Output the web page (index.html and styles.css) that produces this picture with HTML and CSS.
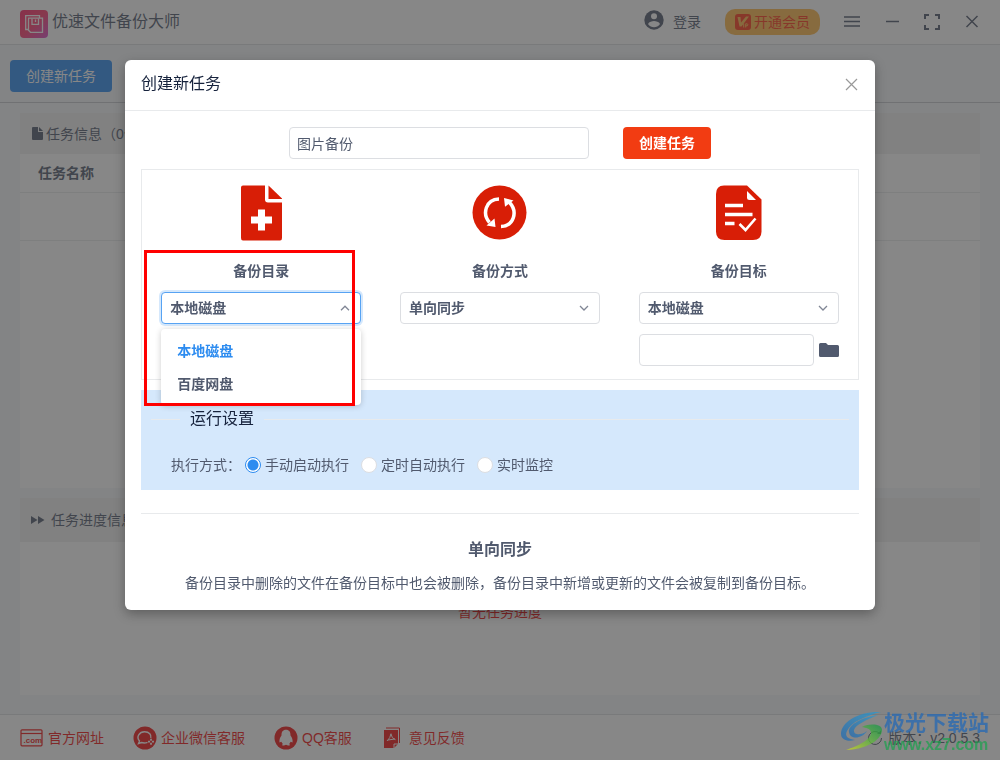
FILE: index.html
```html
<!DOCTYPE html>
<html lang="zh-CN">
<head>
<meta charset="utf-8">
<meta name="viewport" content="width=device-width, initial-scale=1">
<title>优速文件备份大师</title>
<link rel="stylesheet" href="styles.css">
</head>
<body>
<div class="app">
  <header class="titlebar">
    <svg class="logo" viewBox="0 0 28 28" aria-hidden="true">
      <defs><linearGradient id="logoFill" x1="0" y1="0" x2="1" y2="1"><stop offset="0" stop-color="#ff2869"/><stop offset=".5" stop-color="#ff3d6e"/><stop offset="1" stop-color="#d64ac8"/></linearGradient></defs>
      <rect width="28" height="28" rx="4" fill="url(#logoFill)"/>
      <g fill="none" stroke="#fff" stroke-width="1.3"><path d="M8 19.500H5.700V5.700H19.500V8"/><path d="M8.500 8.200H22.500V22.300H10.500L8.500 20.300Z"/><path d="M12 8.500V14.300H18.500V8.500M15.500 9.500V12"/></g>
    </svg>
    <h1 class="app-name">优速文件备份大师</h1>
    <button class="login" type="button">
      <svg viewBox="0 0 20 20" width="20" height="20" aria-hidden="true"><circle cx="10" cy="10" r="9.7" fill="#515a6e"/><circle cx="10" cy="6.3" r="3" fill="#fff"/><path d="M4 14C5 11.7 8 11 10 11S15 11.7 16 14C14.5 16.200 12.200 17.200 10 17.200S5.500 16.200 4 14Z" fill="#fff"/></svg>
      <span>登录</span>
    </button>
    <button class="vip" type="button">
      <svg viewBox="0 0 16 16" width="16" height="16" aria-hidden="true"><rect width="16" height="16" rx="3" fill="#ff3a18"/><path d="M2.500 3H5.500L6 8.500 11 2.500H14L6.500 12.500H4.500Z" fill="#ffb84d"/><path d="M8.700 9.500V13.500M10.700 13.500V9.800H12.300Q13.500 10.800 12.300 11.800H10.600" fill="none" stroke="#ffb84d"/></svg>
      <span>开通会员</span>
    </button>
    <div class="window-tools">
      <button type="button" aria-label="菜单"><svg viewBox="0 0 16 16" width="16" height="16"><path d="M0 3H16M0 7.500H16M0 12H16"/></svg></button>
      <button type="button" aria-label="最小化"><svg viewBox="0 0 16 16" width="16" height="16"><path d="M2 7.500H15"/></svg></button>
      <button type="button" aria-label="最大化"><svg class="thick" viewBox="0 0 16 16" width="16" height="16"><path d="M1 5V1H5M11 1H15V5M15 11V15H11M5 15H1V11"/></svg></button>
      <button type="button" aria-label="关闭窗口"><svg viewBox="0 0 16 16" width="16" height="16"><path d="M2.500 2 13.500 13M13.500 2 2.500 13"/></svg></button>
    </div>
  </header>
  <div class="toolbar"><button class="primary" type="button">创建新任务</button></div>
  <main class="content">
    <section class="tasks">
      <h2 class="panel-title"><svg viewBox="0 0 11 13" width="11" height="13" aria-hidden="true"><path d="M0 1Q0 0 1 0H6V5H11V12Q11 13 10 13H1Q0 13 0 12ZM7 0 11 4H7Z" fill="#515a6e"/></svg>任务信息（0个）</h2>
      <table class="task-table">
        <thead><tr><th>任务名称</th></tr></thead>
        <tbody><tr><td></td></tr></tbody>
      </table>
    </section>
    <section class="progress">
      <h2 class="panel-title tall"><svg viewBox="0 0 15 10" width="15" height="10" aria-hidden="true"><path d="M1 1 7.500 5 1 9ZM8 1 14.500 5 8 9Z" fill="#515a6e"/></svg>任务进度信息</h2>
      <p class="empty">暂无任务进度</p>
    </section>
  </main>
  <footer class="footer">
    <a href="#site"><svg viewBox="0 0 24 18" width="24" height="18" aria-hidden="true"><rect x="1" y=".8" width="21" height="16" rx="1" fill="none" stroke="#f01414" stroke-width="1.2"/><path d="M1 4.500H22" stroke="#f01414" stroke-width="1.200"/><text x="3.500" y="14" class="com">.com</text></svg><span>官方网址</span></a>
    <a href="#wecom"><svg viewBox="0 0 24 24" width="24" height="24" aria-hidden="true"><circle cx="12" cy="12" r="11.500" fill="#f01414"/><path d="M14.500 16.300Q11.500 17.500 8.500 16.500L5.500 17.500 6.500 15C2.800 10.800 6.500 5.800 11.500 5.800S18.500 9 17.800 12" fill="none" stroke="#fff" stroke-width="1.400"/><path d="M18 12.700V18.700M15 15.700H21" stroke="#fff" stroke-width="1.800" stroke-dasharray="2 2"/></svg><span>企业微信客服</span></a>
    <a href="#qq"><svg viewBox="0 0 24 24" width="24" height="24" aria-hidden="true"><circle cx="12" cy="12" r="11.500" fill="#f01414"/><path d="M12 3.800C8.700 3.800 7.500 6 7.500 9.500 6 11.500 5 14 5.500 16.500L7.300 15.700 8.800 18C7.500 19 8 19.500 10 19.500L12 18.700 14 19.500C16 19.500 16.500 19 15.200 18L16.700 15.700 18.500 16.500C19 14 18 11.500 16.500 9.500 16.500 6 15.300 3.800 12 3.800Z" fill="#fff"/></svg><span>QQ客服</span></a>
    <a href="#feedback"><svg viewBox="-2 0 24 22" width="24" height="22" aria-hidden="true"><path d="M1 3H15V17L11 21H1Z" fill="#f01414"/><path d="M3 1H16.500V16" fill="none" stroke="#f01414"/><path d="M11 21V17H15M8 6.500Q7.500 11 4 14M8 7Q8.500 11.500 12.500 12.700M5 13 12 12" fill="none" stroke="#fff"/></svg><span>意见反馈</span></a>
    <p class="version"><svg viewBox="0 0 16 16" width="16" height="16" aria-hidden="true"><path d="M12.500 3.300A6.500 6.500 0 1 0 14.500 8" fill="none" stroke="#515a6e"/><path d="M10 4H14V.5Z" fill="#515a6e"/></svg>版本：v2.0.5.3</p>
  </footer>
</div>

<div class="mask">
  <div class="modal" role="dialog" aria-labelledby="modalTitle">
    <header class="modal-head">
      <h2 id="modalTitle">创建新任务</h2>
      <button type="button" class="close" aria-label="关闭"><svg viewBox="0 0 13 13" width="13" height="13"><path d="M1 1 12 12M12 1 1 12" stroke="#999" stroke-width="1.200"/></svg></button>
    </header>
    <form class="modal-body">
      <div class="name-row">
        <input class="field name" type="text" value="图片备份" aria-label="任务名称">
        <button class="create" type="button">创建任务</button>
      </div>
      <div class="choices">
        <div class="choice">
          <svg width="56" height="56" viewBox="0 0 56 56" aria-hidden="true"><path d="M8 2.500Q8 .5 10 .5H32V14.500Q32 17.500 35 17.500H49V53Q49 55.500 47 55.500H10Q8 55.500 8 53Z" fill="#d81e06"/><path d="M35.500.5 49 13.500V14H35.500Z" fill="#d81e06"/><path d="M25 24.500H32V31.500H39V38.500H32V45.500H25V38.500H18V31.500H25Z" fill="#fff"/></svg>
          <label for="source">备份目录</label>
          <div class="select open">
            <select id="source"><option>本地磁盘</option><option>百度网盘</option></select>
            <svg class="arrow" viewBox="0 0 10 6" width="10" height="6" aria-hidden="true"><path d="M1 5.200 5 1.200 9 5.200"/></svg>
            <ul class="menu"><li class="current">本地磁盘</li><li>百度网盘</li></ul>
          </div>
          <div class="highlight"></div>
        </div>
        <div class="choice">
          <svg width="56" height="56" viewBox="0 0 56 56" aria-hidden="true"><circle cx="27.500" cy="27.500" r="27" fill="#d81e06"/><path d="M27 14C13.500 14.500 10 29 17.500 37.500M29 41.500C42 41 46 26.500 37.500 17.500" fill="none" stroke="#fff" stroke-width="3.500"/><path d="M14.500 40.500 23.500 42 22.500 33.500ZM32 13 41.500 15.500 33 21.800Z" fill="#fff"/></svg>
          <label for="mode">备份方式</label>
          <div class="select">
            <select id="mode"><option>单向同步</option></select>
            <svg class="arrow" viewBox="0 0 10 6" width="10" height="6" aria-hidden="true"><path d="M1 1 5 5 9 1"/></svg>
          </div>
        </div>
        <div class="choice">
          <svg width="56" height="56" viewBox="0 0 56 56" aria-hidden="true"><path d="M13 .5H36L50.500 14.500V46.500Q50.500 55 42 55H13.500Q5 55 5 46.500V9Q5 .5 13 .5Z" fill="#d81e06"/><path d="M36 6 45 15H38.500Q36 15 36 12.500Z" fill="#fff"/><path d="M14 20.500H32M14 29.500H41.500M14 38.500H23.500" stroke="#fff" stroke-width="3.500"/><path d="M28.500 39 34.500 45 44.500 33.500" fill="none" stroke="#fff" stroke-width="2.600"/></svg>
          <label for="target">备份目标</label>
          <div class="select">
            <select id="target"><option>本地磁盘</option></select>
            <svg class="arrow" viewBox="0 0 10 6" width="10" height="6" aria-hidden="true"><path d="M1 1 5 5 9 1"/></svg>
          </div>
          <div class="path-row">
            <input class="field" type="text" aria-label="备份目标路径">
            <button type="button" class="folder" aria-label="选择文件夹"><svg viewBox="0 0 20 14" width="20" height="14"><path d="M0 1.500Q0 0 1.500 0H7L9 2H18.500Q20 2 20 3.500V12.500Q20 14 18.500 14H1.500Q0 14 0 12.500Z" fill="#515a6e"/></svg></button>
          </div>
        </div>
      </div>
      <section class="run">
        <h3 class="divider">运行设置</h3>
        <div class="radios" role="radiogroup" aria-labelledby="runLabel">
          <span id="runLabel" class="run-label">执行方式：</span>
          <label><input type="radio" name="run" checked>手动启动执行</label>
          <label><input type="radio" name="run">定时自动执行</label>
          <label><input type="radio" name="run">实时监控</label>
        </div>
      </section>
      <section class="explain">
        <h3>单向同步</h3>
        <p>备份目录中删除的文件在备份目标中也会被删除，备份目录中新增或更新的文件会被复制到备份目标。</p>
      </section>
    </form>
  </div>
</div>

<div class="watermark">
  <svg viewBox="0 0 42 40" width="42" height="40" aria-hidden="true">
    <defs><linearGradient id="leaf" x1="0" y1="1" x2="1" y2="0"><stop offset="0" stop-color="#d0d822"/><stop offset=".5" stop-color="#62b83c"/><stop offset="1" stop-color="#159447"/></linearGradient><linearGradient id="wave" x1="0" y1="1" x2="1" y2="0"><stop offset="0" stop-color="#2469ae"/><stop offset="1" stop-color="#2b9bd0"/></linearGradient></defs>
    <path d="M40 1C18 0 0 11 0 23 0 29 7 31 14 29 8 28 3 26 6 20 10 11 24 5 40 1Z" fill="url(#wave)"/>
    <path d="M37 4C18 7 7 15 8 21 9 29 21 28 26 20 20 25 12 24 13 19 15 13 26 9 37 4Z" fill="url(#wave)"/>
    <path d="M21 16C29 12 41 13 41 19 41 27 29 38 5 39 17 35 31 28 30 21 29 17 25 17 21 16Z" fill="url(#leaf)"/>
  </svg>
  <div class="mark-text"><span class="mark-name">极光下载站</span><span class="mark-url">www.xz7.com</span></div>
</div>
</body>
</html>
```
FILE: styles.css
```css
* { box-sizing: border-box; }
body, h1, h2, h3, p, ul { margin: 0; }
body {
  font-family: "Liberation Sans", "Noto Sans CJK SC", sans-serif;
  font-size: 14px;
  line-height: 20px;
  color: #515a6e;
}
button, input, select { font: inherit; color: inherit; }
button { border: 0; padding: 0; background: none; }
svg { display: block; flex: none; }

.app { min-height: 100vh; display: flex; flex-direction: column; background: #f5f7f9; }
.titlebar {
  height: 45px;
  flex: none;
  display: flex;
  align-items: center;
  padding: 0 20px;
  background: #fff;
  border-bottom: 1px solid #dcdee2;
}
.logo { width: 28px; height: 28px; margin-top: 3px; }
.app-name { margin-left: 4px; margin-right: auto; font-size: 16px; font-weight: 400; }
.login { display: flex; align-items: center; gap: 9px; }
.login svg { margin-bottom: 4px; }
.vip {
  height: 26px;
  display: flex;
  align-items: center;
  gap: 3px;
  padding: 0 10px;
  margin-left: 24px;
  border-radius: 10px;
  background: #ffb84d;
  color: #ff3a18;
}
.window-tools { display: flex; gap: 24px; margin-left: 24px; }
.window-tools svg { fill: none; stroke: #515a6e; stroke-width: 1.5; }
.window-tools .thick { stroke-width: 2; }
.toolbar { flex: none; padding: 15px 10px 10px; border-bottom: 1px solid #c5c8ce; }
.primary {
  display: block;
  height: 32px;
  padding: 0 16px;
  border-radius: 4px;
  background: #2d8cf0;
  color: #fff;
}
.content { flex: 1; display: flex; flex-direction: column; gap: 10px; padding: 10px 20px 19px; }
.tasks { flex: 375 1 0px; background: #fff; }
.progress { flex: 197 1 0px; background: #fff; }
.panel-title {
  display: flex;
  align-items: center;
  gap: 3px;
  height: 41px;
  padding-left: 12px;
  background: #f0f0f0;
  font-size: 14px;
  font-weight: 400;
}
.panel-title.tall { height: 44px; padding-left: 10px; gap: 6px; }
.task-table { width: 100%; border-collapse: collapse; }
.task-table th, .task-table td { padding: 0 18px; border-bottom: 1px solid #e8eaec; text-align: left; }
.task-table th { height: 38px; font-weight: 700; }
.task-table td { height: 48px; }
.empty { padding-top: 60px; text-align: center; color: #f01414; }
.footer {
  height: 46px;
  flex: none;
  display: flex;
  align-items: center;
  gap: 29px;
  padding: 0 20px;
  background: #fff;
  border-top: 1px solid #dcdee2;
}
.footer a { display: flex; align-items: center; gap: 4px; color: #f01414; text-decoration: none; }
.com { font: bold 8px "Liberation Sans", sans-serif; fill: #f01414; }
.version { display: flex; align-items: center; gap: 5px; margin-left: auto; }

.mask { position: fixed; inset: 0; padding-top: 60px; overflow: auto; background: rgba(55, 55, 55, .6); }
.modal {
  width: 75%;
  min-width: 700px;
  margin: 0 auto;
  background: #fff;
  border-radius: 6px;
  box-shadow: 0 4px 12px rgba(0, 0, 0, .3);
}
.modal-head {
  display: flex;
  align-items: center;
  justify-content: space-between;
  height: 51px;
  padding: 0 17px 2px 16px;
  border-bottom: 1px solid #e8eaec;
}
.modal-head h2 { font-size: 16px; font-weight: 400; color: #17233d; }
.modal-body { padding: 16px; }
.name-row { display: flex; justify-content: center; gap: 34px; margin-bottom: 10px; }
.field {
  height: 32px;
  min-width: 0;
  padding: 0 7px;
  border: 1px solid #dcdee2;
  border-radius: 4px;
  background: #fff;
}
.name { width: 300px; }
.create { height: 32px; padding: 0 16px; border-radius: 4px; background: #f23c12; color: #fff; font-weight: 700; }
.choices { display: grid; grid-template-columns: repeat(3, 1fr); border: 1px solid #e8eaec; }
.choice {
  position: relative;
  display: flex;
  flex-direction: column;
  align-items: center;
  height: 209px;
  padding: 15px 19px 0;
}
.choice > label { margin: 20px 0 11px; font-weight: 700; }
.select { position: relative; width: 100%; max-width: 200px; font-weight: 700; }
.select select {
  display: block;
  width: 100%;
  height: 32px;
  padding: 0 8px;
  appearance: none;
  border: 1px solid #dcdee2;
  border-radius: 4px;
  background: #fff;
}
.open select { border-color: #57a3f3; box-shadow: 0 0 0 2px rgba(45, 140, 240, .2); }
.arrow { position: absolute; top: 13px; right: 11px; fill: none; stroke: #808695; stroke-width: 1.3; }
.menu {
  position: absolute;
  z-index: 1;
  top: 37px;
  left: 0;
  width: 100%;
  padding: 5px 0;
  list-style: none;
  background: #fff;
  border-radius: 4px;
  box-shadow: 0 1px 6px rgba(0, 0, 0, .2);
}
.menu li { padding: 7px 16px 6px; }
.menu .current { color: #2d8cf0; }
.highlight {
  position: absolute;
  z-index: 2;
  top: 80px;
  left: 2px;
  width: 211px;
  height: 156px;
  border: 3px solid #f00;
  pointer-events: none;
}
.path-row { display: flex; align-items: center; gap: 5px; width: 100%; max-width: 200px; margin-top: 10px; }
.path-row .field { flex: 1; }
.run { height: 100px; margin-top: 10px; padding: 19px 10px 0; background: #d5e8fc; }
.divider { display: flex; align-items: center; gap: 10px; font-size: 16px; font-weight: 400; color: #17233d; }
.divider::before, .divider::after { content: ""; height: 1px; width: 29px; background: #e8eaec; }
.divider::after { flex: 1; }
.radios { display: flex; align-items: center; gap: 12px; padding: 26px 20px 0; }
.run-label { margin-right: -8px; }
.radios label { display: flex; align-items: center; gap: 4px; }
.radios input {
  appearance: none;
  width: 16px;
  height: 16px;
  margin: 0;
  border: 1px solid #dcdee2;
  border-radius: 50%;
  background: #fff;
}
.radios input:checked { border-color: #2d8cf0; background: radial-gradient(circle, #2d8cf0 5px, #fff 6px); }
.explain { margin-top: 23px; padding-top: 26px; border-top: 1px solid #e8eaec; text-align: center; }
.explain h3 { font-size: 16px; font-weight: 700; margin-bottom: 13px; }
.explain p { padding-bottom: 1px; }

.watermark { position: fixed; right: 11px; bottom: 5px; display: flex; gap: 1px; opacity: .75; }
.mark-text { display: flex; flex-direction: column; }
.mark-name { font-size: 21px; line-height: 24px; font-weight: 700; color: #2469b4; }
.mark-url { font-size: 16px; line-height: 20px; font-weight: 700; color: #20a050; }
```
